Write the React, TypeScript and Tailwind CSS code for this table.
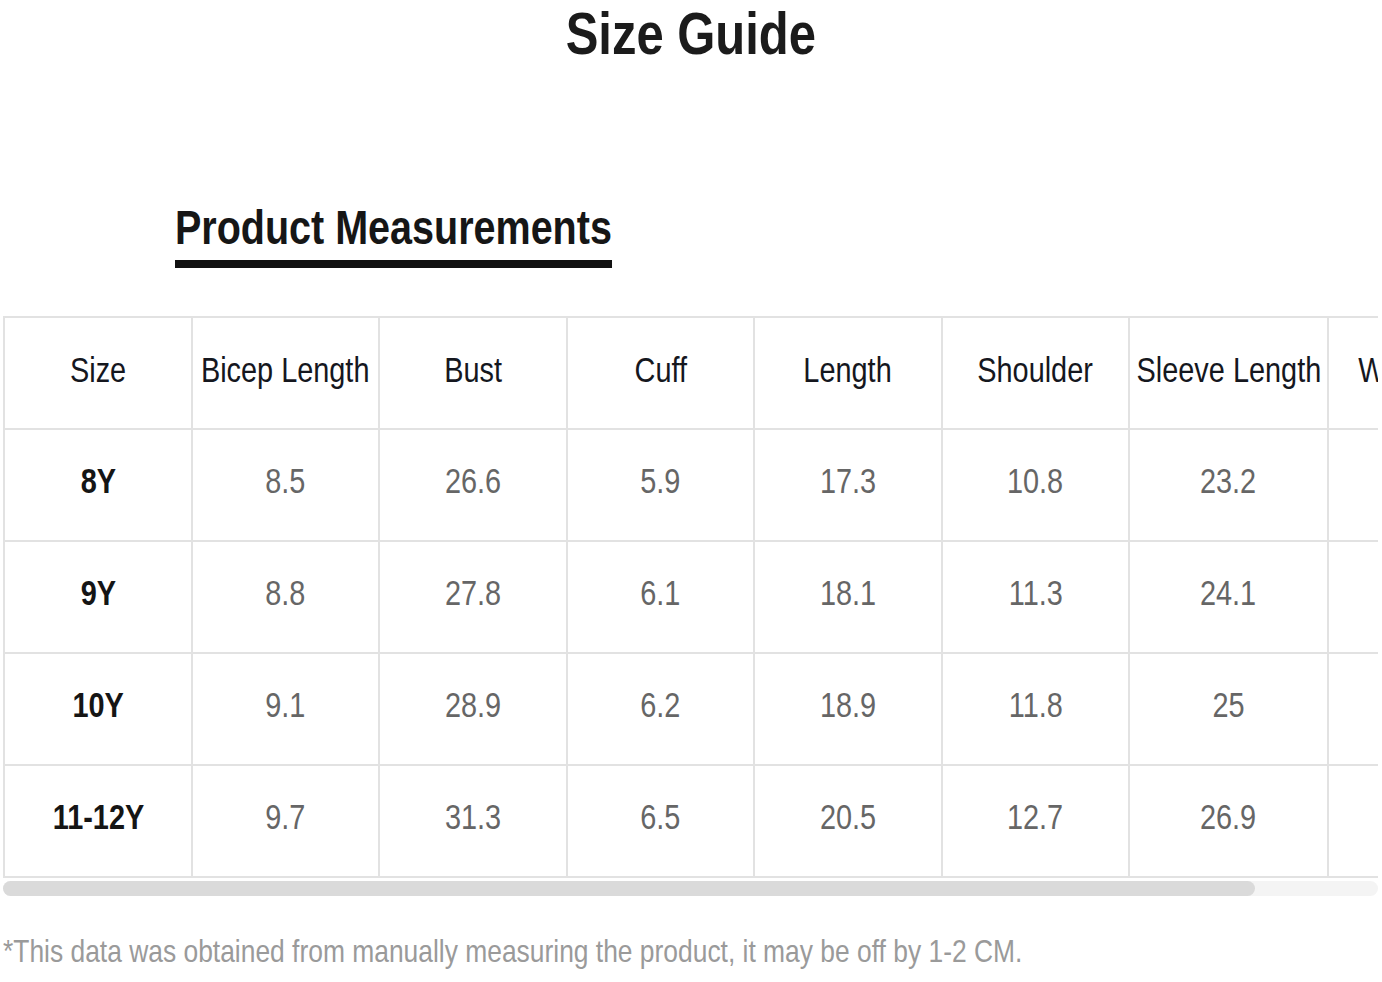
import React from "react";

const headers = ["Size", "Bicep Length", "Bust", "Cuff", "Length", "Shoulder", "Sleeve Length", "Waistline"];
const rows = [
  ["8Y", "8.5", "26.6", "5.9", "17.3", "10.8", "23.2", "22.4"],
  ["9Y", "8.8", "27.8", "6.1", "18.1", "11.3", "24.1", "23.6"],
  ["10Y", "9.1", "28.9", "6.2", "18.9", "11.8", "25", "24.8"],
  ["11-12Y", "9.7", "31.3", "6.5", "20.5", "12.7", "26.9", "26.4"],
];

export default function App() {
  return (
    <div
      className="w-[1382px] h-[982px] overflow-hidden bg-white"
      style={{ fontFamily: '"Liberation Sans", Arial, sans-serif' }}
    >
      <div className="flex justify-center pt-[5px]">
        <h1 className="inline-block scale-x-[0.83] whitespace-nowrap text-[59px] font-bold leading-none text-[#1b1b1b]">
          Size Guide
        </h1>
      </div>
      <div className="mt-[140px] pl-[175px]">
        <span className="inline-block origin-left scale-x-[0.823] whitespace-nowrap border-b-[8px] border-[#111] pb-[8px] text-[48px] font-bold leading-none text-[#161616]">
          Product Measurements
        </span>
      </div>
      <div className="ml-[3px] mt-[48px] w-[1375px] overflow-hidden">
        <div className="grid w-[1510px] grid-cols-[188px_187px_188px_187px_188px_187px_199px_177px] border-l-2 border-t-2 border-[#e2e2e2]">
          {headers.map((h) => (
            <div
              key={h}
              className="flex h-[112px] items-center justify-center border-b-2 border-r-2 border-[#e2e2e2] pb-[8px]"
            >
              <span className="inline-block scale-x-[0.825] whitespace-nowrap text-[35px] leading-none text-[#15171e]">{h}</span>
            </div>
          ))}
          {rows.map((r) =>
            r.map((v, i) => (
              <div
                key={r[0] + i}
                className="flex h-[112px] items-center justify-center border-b-2 border-r-2 border-[#e2e2e2] pb-[10px]"
              >
                <span
                  className={
                    i === 0
                      ? "inline-block scale-x-[0.825] whitespace-nowrap text-[35px] font-bold leading-none text-[#151515]"
                      : "inline-block scale-x-[0.825] whitespace-nowrap text-[35px] leading-none text-[#666]"
                  }
                >
                  {v}
                </span>
              </div>
            ))
          )}
        </div>
      </div>
      <div className="ml-[3px] mt-[3px] h-[15px] w-[1375px] rounded-full bg-[#f4f4f4]">
        <div className="h-full w-[1252px] rounded-full bg-[#dadada]" />
      </div>
      <p className="ml-[3px] mt-[39px] origin-left scale-x-[0.825] whitespace-nowrap text-[32px] leading-none text-[#9a9a9a]">
        *This data was obtained from manually measuring the product, it may be off by 1-2 CM.
      </p>
    </div>
  );
}
